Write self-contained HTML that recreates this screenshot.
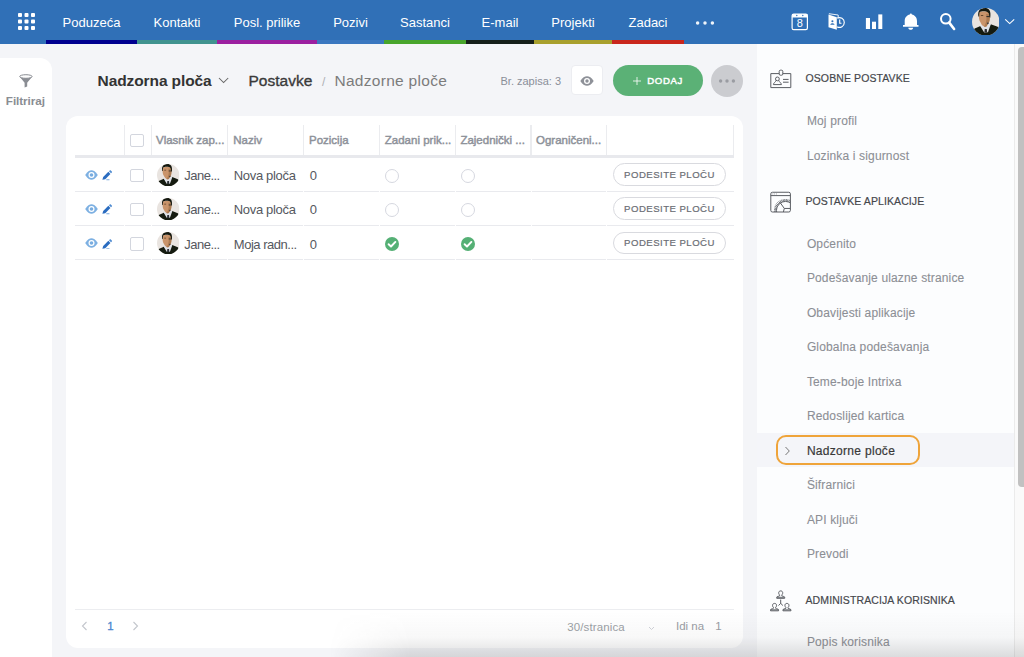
<!DOCTYPE html>
<html lang="hr">
<head>
<meta charset="utf-8">
<title>Nadzorne ploče</title>
<style>
*{box-sizing:border-box;margin:0;padding:0}
html,body{width:1024px;height:657px;overflow:hidden}
body{font-family:"Liberation Sans",sans-serif;background:#f4f5f8;position:relative;color:#444}
.a{position:absolute}
.t{position:absolute;white-space:nowrap}
#nav{position:absolute;left:0;top:0;width:1024px;height:44px;background:#3070b7}
.bar{position:absolute;top:40px;height:4px}
#left{position:absolute;left:0;top:58px;width:52px;height:599px;background:#fff;border-top-right-radius:12px}
#card{position:absolute;left:66px;top:116.4px;width:677px;height:531.4px;background:#fff;border-radius:12px}
.vs{position:absolute;top:125.4px;width:1.2px;height:30px;background:#ebecef}
.hl{position:absolute;left:75px;width:659px;height:1.3px;background:#e9eaee}
.cb{position:absolute;left:130px;width:13.5px;height:13.5px;border:1px solid #d3d6de;border-radius:2px;background:#fff}
.rad{position:absolute;width:14px;height:14px;border:1px solid #d6d8e0;border-radius:50%;background:#fff}
.pb{position:absolute;left:613px;width:113px;height:22.5px;border:1px solid #d9dadf;border-radius:12px;background:#fff}
#right{position:absolute;left:757px;top:44px;width:257px;height:613px;background:#fcfdfe}
#sb{position:absolute;left:1014px;top:44px;width:10px;height:613px;background:#fafafa;border-left:1px solid #ebebeb}
#sbt{position:absolute;left:1018px;top:47px;width:12px;height:439.5px;background:#c1c1c1;border-radius:4px}
</style>
</head>
<body>
<svg width="0" height="0" style="position:absolute">
<defs>
<symbol id="av" viewBox="0 0 28 28">
<clipPath id="avc"><circle cx="14" cy="14" r="14"/></clipPath>
<g clip-path="url(#avc)">
<rect width="28" height="28" fill="#e9e4e0"/>
<path d="M0 23 L2.8 20.8 L8.6 18.3 L13.8 22.5 L19 16.4 L26 19 L28 21 L28 28 L0 28Z" fill="#151b10"/>
<path d="M8.4 18.4 L10 16.3 L18 15.6 L19.1 16.6 L16.2 24.6 L12.4 24.9Z" fill="#dfe1e6"/>
<path d="M12.9 21.2 L15 21.2 L15.4 24.9 L12.5 24.9Z" fill="#2b2f35"/>
<path d="M7 5 C7 3.2 17.9 3.2 18 5 L18 11 C18 14 16.2 17 14.6 18.7 C13 19.7 11 18.6 9.6 16.5 C8 14 7 12 7 9Z" fill="#c9946b"/>
<path d="M14.2 6 L18 6 L18 11 C18 14 16.2 17 14.6 18.7 C13.6 19.3 12.8 19.2 12 18.7 C14.5 16 15.4 10 14.2 6Z" fill="#ac7b52"/>
<path d="M6.5 8.6 C5.4 2 9 0 13 0 C17.2 0 19.6 2.6 18.5 9.8 L17.5 9.2 C17.7 6 17 4.3 15 3.7 C12 3.1 9 3.3 7.7 4.3 C7.2 5.6 7.4 7 7.3 8.6Z" fill="#14180f"/>
<rect x="9" y="7.2" width="2.4" height="0.9" fill="#5b3f25"/>
<rect x="14.6" y="8.2" width="3" height="1" fill="#2a2a2a"/>
<rect x="15.2" y="14.8" width="1.6" height="1.4" fill="#3a3f48"/>
</g>
</symbol>
<symbol id="eye" viewBox="0 0 13 10">
<path d="M0.2 5 C2.4 1.5 4.6 0.2 6.5 0.2 C8.4 0.2 10.6 1.5 12.8 5 C10.6 8.5 8.4 9.8 6.5 9.8 C4.6 9.8 2.4 8.5 0.2 5Z" fill="#7db0e2"/>
<circle cx="6.5" cy="5" r="3" fill="#fff"/><circle cx="6.5" cy="5" r="1.8" fill="#79ade0"/>
</symbol>
<symbol id="pen" viewBox="0 0 11 11">
<path d="M0.4 10 L1.2 7.2 L6.5 1.9 L8.6 4 L3.3 9.3Z" fill="#2a6cc0"/>
<path d="M7.1 1.3 L7.9 0.5 C8.2 0.2 8.7 0.2 9 0.5 L10 1.5 C10.3 1.8 10.3 2.3 10 2.6 L9.2 3.4Z" fill="#4f8bd0"/>
<rect x="4.4" y="9.5" width="3.2" height="1" fill="#6ea3dc"/>
</symbol>
<symbol id="ok" viewBox="0 0 14 14">
<circle cx="7" cy="7" r="7" fill="#55b075"/>
<path d="M3.6 7.2 L6 9.5 L10.4 4.9" fill="none" stroke="#fff" stroke-width="1.9" stroke-linecap="round" stroke-linejoin="round"/>
</symbol>
</defs>
</svg>

<div id="nav">
<svg class="a" style="left:18px;top:13px" width="17" height="17" viewBox="0 0 17 17"><g fill="#fff"><rect x="0" y="0" width="4" height="4" rx="0.9"/><rect x="6.5" y="0" width="4" height="4" rx="0.9"/><rect x="13" y="0" width="4" height="4" rx="0.9"/><rect x="0" y="6.5" width="4" height="4" rx="0.9"/><rect x="6.5" y="6.5" width="4" height="4" rx="0.9"/><rect x="13" y="6.5" width="4" height="4" rx="0.9"/><rect x="0" y="13" width="4" height="4" rx="0.9"/><rect x="6.5" y="13" width="4" height="4" rx="0.9"/><rect x="13" y="13" width="4" height="4" rx="0.9"/></g></svg>
<div class="bar" style="left:46px;width:91px;background:#00008f"></div>
<div class="t nv" style="left:46px;top:13.00px;height:19px;line-height:19px;font-size:13px;color:#fff;width:91px;text-align:center;">Poduzeća</div>
<div class="bar" style="left:137px;width:80px;background:#40938f"></div>
<div class="t nv" style="left:137px;top:13.00px;height:19px;line-height:19px;font-size:13px;color:#fff;width:80px;text-align:center;">Kontakti</div>
<div class="bar" style="left:217px;width:100px;background:#9b1fa0"></div>
<div class="t nv" style="left:217px;top:13.00px;height:19px;line-height:19px;font-size:13px;color:#fff;width:100px;text-align:center;">Posl. prilike</div>
<div class="bar" style="left:317px;width:67px;background:#3a77c0"></div>
<div class="t nv" style="left:317px;top:13.00px;height:19px;line-height:19px;font-size:13px;color:#fff;width:67px;text-align:center;">Pozivi</div>
<div class="bar" style="left:384px;width:82px;background:#48a52c"></div>
<div class="t nv" style="left:384px;top:13.00px;height:19px;line-height:19px;font-size:13px;color:#fff;width:82px;text-align:center;">Sastanci</div>
<div class="bar" style="left:466px;width:68px;background:#16201a"></div>
<div class="t nv" style="left:466px;top:13.00px;height:19px;line-height:19px;font-size:13px;color:#fff;width:68px;text-align:center;">E-mail</div>
<div class="bar" style="left:534px;width:78px;background:#a8a02e"></div>
<div class="t nv" style="left:534px;top:13.00px;height:19px;line-height:19px;font-size:13px;color:#fff;width:78px;text-align:center;">Projekti</div>
<div class="bar" style="left:612px;width:72px;background:#c9261d"></div>
<div class="t nv" style="left:612px;top:13.00px;height:19px;line-height:19px;font-size:13px;color:#fff;width:72px;text-align:center;">Zadaci</div>
<svg class="a" style="left:695px;top:20px" width="20" height="6" viewBox="0 0 20 6"><g fill="#fff" fill-opacity="0.92"><circle cx="2.6" cy="3" r="1.75"/><circle cx="10" cy="3" r="1.75"/><circle cx="17.4" cy="3" r="1.75"/></g></svg>
<svg class="a" style="left:791px;top:13px" width="18" height="18" viewBox="0 0 18 18">
<rect x="1.1" y="1.1" width="15.3" height="15.6" rx="1.6" fill="none" stroke="#fff" stroke-width="1.2"/>
<rect x="1.1" y="1.1" width="15.3" height="3.4" fill="#fff"/>
<circle cx="5.8" cy="2.5" r="0.7" fill="#3070b7"/><circle cx="11.8" cy="2.5" r="0.7" fill="#3070b7"/>
<text x="8.8" y="14.1" font-family="Liberation Sans, sans-serif" font-size="11" fill="#fff" text-anchor="middle">8</text>
</svg>
<svg class="a" style="left:828px;top:13px" width="19" height="18" viewBox="0 0 19 18">
<path d="M0.5 1.4 L8.8 4.3 L8.8 16.7 L0.5 14.2Z" fill="#fff"/>
<path d="M0.9 0.7 L10.2 2 L10.2 4.9" fill="none" stroke="#fff" stroke-width="0.9"/>
<circle cx="4.4" cy="8.3" r="1.05" fill="#3070b7"/><path d="M2.3 11.7 C2.6 9.7 6.2 9.7 6.5 11.7Z" fill="#3070b7"/>
<path d="M9.2 5.12 A4.9 4.9 0 1 1 9.2 13.88" fill="none" stroke="#fff" stroke-width="1.15"/>
<path d="M11.7 6.6 L11.7 10.2 L13.5 10.2" fill="none" stroke="#fff" stroke-width="1.15"/>
</svg>
<svg class="a" style="left:865px;top:14px" width="18" height="16" viewBox="0 0 18 16"><g fill="#fff">
<rect x="0.9" y="4" width="4.1" height="11"/><rect x="7" y="7.7" width="4" height="7.3"/><rect x="13.3" y="0.4" width="4" height="14.6"/></g></svg>
<svg class="a" style="left:902px;top:13px" width="18" height="18" viewBox="0 0 18 18">
<path d="M8.85 0.4 C9.6 0.4 9.9 1 9.9 1.6 C12.8 2.2 15 4.6 15 8 L15 12.1 L16.5 12.1 L16.5 13.7 L1 13.7 L1 12.1 L2.7 12.1 L2.7 8 C2.7 4.6 4.9 2.2 7.8 1.6 C7.8 1 8.1 0.4 8.85 0.4Z" fill="#fff"/>
<path d="M6.3 14.7 L11.1 14.7 C11.1 17.5 6.3 17.5 6.3 14.7Z" fill="#fff"/></svg>
<svg class="a" style="left:939px;top:12px" width="18" height="20" viewBox="0 0 18 20">
<circle cx="6.8" cy="6.8" r="4.8" fill="none" stroke="#fff" stroke-width="2"/>
<path d="M10.2 10.6 L15.1 17" stroke="#fff" stroke-width="2.6" stroke-linecap="round"/></svg>
<svg class="a" style="left:971.5px;top:7.6px" width="27.6" height="27.6"><use href="#av"/></svg>
<svg class="a" style="left:1004px;top:18px" width="12" height="8" viewBox="0 0 12 8"><path d="M1.2 1.3 L5.7 5.6 L10.2 1.3" fill="none" stroke="#fff" stroke-width="1.1"/></svg>
</div>
<div id="left"></div>
<svg class="a" style="left:18.5px;top:74.4px" width="14" height="14" viewBox="0 0 14 14">
<path d="M0.7 2.8 L5.6 8.8 L5.6 13.5 L8.2 12.4 L8.2 8.8 L13.1 2.8Z" fill="#8a8d93"/>
<ellipse cx="6.9" cy="2.5" rx="6.2" ry="1.8" fill="#fdfdfd" stroke="#8a8d93" stroke-width="1"/></svg>
<div class="t fl" style="left:5.8px;top:92.00px;height:17px;line-height:17px;font-size:11.7px;color:#8a8d93;font-weight:bold;letter-spacing:-0.05px;">Filtriraj</div>
<div class="t h1" style="left:97.6px;top:69.00px;height:23px;line-height:23px;font-size:15.5px;color:#333;font-weight:bold;letter-spacing:-0.1px;">Nadzorna ploča</div>
<svg class="a" style="left:218px;top:77px" width="11" height="7" viewBox="0 0 11 7"><path d="M1 1 L5.6 5.6 L10.2 1" fill="none" stroke="#666" stroke-width="1.05"/></svg>
<div class="t h2" style="left:248.5px;top:69.00px;height:23px;line-height:23px;font-size:15.5px;color:#3a3a3a;-webkit-text-stroke:0.35px #3a3a3a;">Postavke</div>
<div class="t h3" style="left:322px;top:73.00px;height:18px;line-height:18px;font-size:12px;color:#aeb0b5;">/</div>
<div class="t h4" style="left:334.4px;top:69.00px;height:23px;line-height:23px;font-size:15.5px;color:#7c7c7c;letter-spacing:0.3px;">Nadzorne ploče</div>
<div class="t brz" style="left:500.5px;top:73.00px;height:16px;line-height:16px;font-size:11px;color:#8a8f98;">Br. zapisa: 3</div>
<div class="a" style="left:570.6px;top:65px;width:32.4px;height:30.4px;background:#fff;border:1px solid #ecedf1;border-radius:4px"></div>
<svg class="a" style="left:580px;top:75.5px" width="14" height="10" viewBox="0 0 14 10">
<path d="M0.3 5 C2.5 1.4 4.8 0.3 7 0.3 C9.2 0.3 11.5 1.4 13.7 5 C11.5 8.6 9.2 9.7 7 9.7 C4.8 9.7 2.5 8.6 0.3 5Z" fill="#8e9198"/>
<circle cx="7" cy="5" r="3" fill="#fff"/><circle cx="7" cy="5" r="1.7" fill="#8e9198"/></svg>
<div class="a" style="left:613px;top:65px;width:90px;height:31px;background:#5bb176;border-radius:16px"></div>
<svg class="a" style="left:631.6px;top:75.8px" width="10" height="10" viewBox="0 0 10 10"><path d="M5 1 V9 M1 5 H9" stroke="#fff" stroke-width="0.9" stroke-opacity="0.9" fill="none"/></svg>
<div class="t dodaj" style="left:647.3px;top:74.00px;height:13px;line-height:13px;font-size:9.6px;color:#fff;letter-spacing:0.64px;-webkit-text-stroke:0.45px #fff;">DODAJ</div>
<div class="a" style="left:711px;top:65px;width:32px;height:32px;background:#cbccd0;border-radius:50%"></div>
<svg class="a" style="left:718px;top:78px" width="18" height="6" viewBox="0 0 18 6"><g fill="#9a9ca2"><circle cx="2.6" cy="3" r="1.7"/><circle cx="9" cy="3" r="1.7"/><circle cx="15.4" cy="3" r="1.7"/></g></svg>
<div id="card"></div>
<div class="vs" style="left:123.7px"></div>
<div class="vs" style="left:150.9px"></div>
<div class="vs" style="left:227.2px"></div>
<div class="vs" style="left:303.2px"></div>
<div class="vs" style="left:379.1px"></div>
<div class="vs" style="left:454.7px"></div>
<div class="vs" style="left:530.4px"></div>
<div class="vs" style="left:605.9px"></div>
<div class="vs" style="left:733.2px"></div>
<div class="hl" style="top:155.2px;height:2.8px;background:#e8e9ed"></div>
<div class="hl" style="top:191.0px"></div>
<div class="a" style="left:123.9px;top:190.5px;width:1px;height:2.5px;background:#fff"></div>
<div class="a" style="left:151.1px;top:190.5px;width:1px;height:2.5px;background:#fff"></div>
<div class="a" style="left:227.4px;top:190.5px;width:1px;height:2.5px;background:#fff"></div>
<div class="a" style="left:303.4px;top:190.5px;width:1px;height:2.5px;background:#fff"></div>
<div class="a" style="left:379.3px;top:190.5px;width:1px;height:2.5px;background:#fff"></div>
<div class="a" style="left:454.9px;top:190.5px;width:1px;height:2.5px;background:#fff"></div>
<div class="a" style="left:530.6px;top:190.5px;width:1px;height:2.5px;background:#fff"></div>
<div class="a" style="left:606.1px;top:190.5px;width:1px;height:2.5px;background:#fff"></div>
<div class="hl" style="top:225.2px"></div>
<div class="a" style="left:123.9px;top:224.7px;width:1px;height:2.5px;background:#fff"></div>
<div class="a" style="left:151.1px;top:224.7px;width:1px;height:2.5px;background:#fff"></div>
<div class="a" style="left:227.4px;top:224.7px;width:1px;height:2.5px;background:#fff"></div>
<div class="a" style="left:303.4px;top:224.7px;width:1px;height:2.5px;background:#fff"></div>
<div class="a" style="left:379.3px;top:224.7px;width:1px;height:2.5px;background:#fff"></div>
<div class="a" style="left:454.9px;top:224.7px;width:1px;height:2.5px;background:#fff"></div>
<div class="a" style="left:530.6px;top:224.7px;width:1px;height:2.5px;background:#fff"></div>
<div class="a" style="left:606.1px;top:224.7px;width:1px;height:2.5px;background:#fff"></div>
<div class="hl" style="top:259.2px"></div>
<div class="a" style="left:123.9px;top:258.7px;width:1px;height:2.5px;background:#fff"></div>
<div class="a" style="left:151.1px;top:258.7px;width:1px;height:2.5px;background:#fff"></div>
<div class="a" style="left:227.4px;top:258.7px;width:1px;height:2.5px;background:#fff"></div>
<div class="a" style="left:303.4px;top:258.7px;width:1px;height:2.5px;background:#fff"></div>
<div class="a" style="left:379.3px;top:258.7px;width:1px;height:2.5px;background:#fff"></div>
<div class="a" style="left:454.9px;top:258.7px;width:1px;height:2.5px;background:#fff"></div>
<div class="a" style="left:530.6px;top:258.7px;width:1px;height:2.5px;background:#fff"></div>
<div class="a" style="left:606.1px;top:258.7px;width:1px;height:2.5px;background:#fff"></div>
<div class="cb" style="top:133.5px"></div>
<div class="t th" style="left:156px;top:132.00px;height:16px;line-height:16px;font-size:11.5px;color:#8d9199;-webkit-text-stroke:0.45px #8d9199;">Vlasnik zap...</div>
<div class="t th" style="left:233.2px;top:132.00px;height:16px;line-height:16px;font-size:11.5px;color:#8d9199;-webkit-text-stroke:0.45px #8d9199;">Naziv</div>
<div class="t th" style="left:309px;top:132.00px;height:16px;line-height:16px;font-size:11.5px;color:#8d9199;-webkit-text-stroke:0.45px #8d9199;">Pozicija</div>
<div class="t th" style="left:384.8px;top:132.00px;height:16px;line-height:16px;font-size:11.5px;color:#8d9199;-webkit-text-stroke:0.45px #8d9199;">Zadani prik...</div>
<div class="t th" style="left:460.4px;top:132.00px;height:16px;line-height:16px;font-size:11.5px;color:#8d9199;-webkit-text-stroke:0.45px #8d9199;">Zajednički ...</div>
<div class="t th" style="left:536px;top:132.00px;height:16px;line-height:16px;font-size:11.5px;color:#8d9199;-webkit-text-stroke:0.45px #8d9199;">Ograničeni...</div>
<svg class="a" style="left:84.8px;top:170.10px" width="13" height="10"><use href="#eye"/></svg>
<svg class="a" style="left:101.6px;top:170.30px" width="10.8" height="10.8"><use href="#pen"/></svg>
<div class="cb" style="top:168.80px"></div>
<svg class="a" style="left:157.3px;top:163.80px" width="22.4" height="22.4"><use href="#av"/></svg>
<div class="t td jn" style="left:184.2px;top:166.00px;height:19px;line-height:19px;font-size:13px;color:#55585e;letter-spacing:-0.5px;">Jane...</div>
<div class="t td nm" style="left:233.8px;top:166.00px;height:19px;line-height:19px;font-size:13px;color:#55585e;letter-spacing:-0.33px;">Nova ploča</div>
<div class="t td" style="left:309.8px;top:166.00px;height:19px;line-height:19px;font-size:13px;color:#55585e;">0</div>
<div class="rad" style="left:385px;top:169.10px"></div>
<div class="rad" style="left:460.8px;top:169.10px"></div>
<div class="pb" style="top:163.30px"></div>
<div class="t pbt" style="left:613px;top:168.00px;height:13px;line-height:13px;font-size:9.6px;color:#6b6e75;letter-spacing:0.47px;width:113px;text-align:center;-webkit-text-stroke:0.2px #6b6e75;">PODESITE PLOČU</div>
<svg class="a" style="left:84.8px;top:204.25px" width="13" height="10"><use href="#eye"/></svg>
<svg class="a" style="left:101.6px;top:204.45px" width="10.8" height="10.8"><use href="#pen"/></svg>
<div class="cb" style="top:202.95px"></div>
<svg class="a" style="left:157.3px;top:197.95px" width="22.4" height="22.4"><use href="#av"/></svg>
<div class="t td jn" style="left:184.2px;top:200.00px;height:19px;line-height:19px;font-size:13px;color:#55585e;letter-spacing:-0.5px;">Jane...</div>
<div class="t td nm" style="left:233.8px;top:200.00px;height:19px;line-height:19px;font-size:13px;color:#55585e;letter-spacing:-0.33px;">Nova ploča</div>
<div class="t td" style="left:309.8px;top:200.00px;height:19px;line-height:19px;font-size:13px;color:#55585e;">0</div>
<div class="rad" style="left:385px;top:203.25px"></div>
<div class="rad" style="left:460.8px;top:203.25px"></div>
<div class="pb" style="top:197.45px"></div>
<div class="t pbt" style="left:613px;top:202.00px;height:13px;line-height:13px;font-size:9.6px;color:#6b6e75;letter-spacing:0.47px;width:113px;text-align:center;-webkit-text-stroke:0.2px #6b6e75;">PODESITE PLOČU</div>
<svg class="a" style="left:84.8px;top:238.40px" width="13" height="10"><use href="#eye"/></svg>
<svg class="a" style="left:101.6px;top:238.60px" width="10.8" height="10.8"><use href="#pen"/></svg>
<div class="cb" style="top:237.10px"></div>
<svg class="a" style="left:157.3px;top:232.10px" width="22.4" height="22.4"><use href="#av"/></svg>
<div class="t td jn" style="left:184.2px;top:235.00px;height:19px;line-height:19px;font-size:13px;color:#55585e;letter-spacing:-0.5px;">Jane...</div>
<div class="t td nm" style="left:233.8px;top:235.00px;height:19px;line-height:19px;font-size:13px;color:#55585e;letter-spacing:-0.48px;">Moja radn...</div>
<div class="t td" style="left:309.8px;top:235.00px;height:19px;line-height:19px;font-size:13px;color:#55585e;">0</div>
<svg class="a" style="left:385px;top:237.40px" width="14" height="14"><use href="#ok"/></svg>
<svg class="a" style="left:460.8px;top:237.40px" width="14" height="14"><use href="#ok"/></svg>
<div class="pb" style="top:231.60px"></div>
<div class="t pbt" style="left:613px;top:236.00px;height:13px;line-height:13px;font-size:9.6px;color:#6b6e75;letter-spacing:0.47px;width:113px;text-align:center;-webkit-text-stroke:0.2px #6b6e75;">PODESITE PLOČU</div>
<div class="hl" style="top:609px;height:1px;background:#ecedf0"></div>
<svg class="a" style="left:81px;top:621.3px" width="7" height="10" viewBox="0 0 7 10"><path d="M5.5 1 L1.5 5 L5.5 9" fill="none" stroke="#c3c6cc" stroke-width="1.1"/></svg>
<div class="t pg1" style="left:107.3px;top:618.00px;height:16px;line-height:16px;font-size:11.5px;color:#4a86cf;-webkit-text-stroke:0.3px #4a86cf;">1</div>
<svg class="a" style="left:132px;top:621.3px" width="7" height="10" viewBox="0 0 7 10"><path d="M1.5 1 L5.5 5 L1.5 9" fill="none" stroke="#c3c6cc" stroke-width="1.1"/></svg>
<div class="t pgs" style="left:567.2px;top:619.00px;height:16px;line-height:16px;font-size:11.5px;color:#9c9fa5;letter-spacing:0.12px;">30/stranica</div>
<svg class="a" style="left:647.5px;top:625.5px" width="7" height="5" viewBox="0 0 7 5"><path d="M1 1 L3.5 3.5 L6 1" fill="none" stroke="#d0d2d8" stroke-width="1"/></svg>
<div class="t pgi" style="left:676px;top:618.00px;height:16px;line-height:16px;font-size:11.5px;color:#9a9da4;">Idi na</div>
<div class="t pgn" style="left:715.3px;top:618.00px;height:16px;line-height:16px;font-size:11.5px;color:#9a9da4;">1</div>
<div id="right"></div>
<div class="a" style="left:757px;top:433px;width:257px;height:34.4px;background:#f4f5f9"></div>
<div class="a" style="left:776.3px;top:435.2px;width:143.8px;height:30.3px;border:2px solid #efa43a;border-radius:10px"></div>
<svg class="a" style="left:784px;top:445.5px" width="7" height="10" viewBox="0 0 7 10"><path d="M1.5 1 L5.3 5 L1.5 9" fill="none" stroke="#777" stroke-width="1"/></svg>
<svg class="a" style="left:769px;top:69px" width="24" height="20" viewBox="0 0 24 20">
<g fill="none" stroke="#5a5d63" stroke-width="1">
<path d="M10 4.6 H1.8 V18.6 H21.8 V4.6 H14"/>
<rect x="10.2" y="1.2" width="3.6" height="5" rx="1.2" fill="#fcfdfe"/>
<circle cx="8.4" cy="9.9" r="1.9"/>
<path d="M7 11.4 C6.6 13.4 4.6 13.4 4.4 15.6 H12.4 C12.2 13.4 10.2 13.4 9.8 11.4"/>
<path d="M14 10.4 H19.6 M14 13.2 H19.6"/>
</g></svg>
<svg class="a" style="left:769px;top:190px" width="24" height="24" viewBox="0 0 24 24">
<clipPath id="wc"><rect x="1.8" y="2.25" width="19.6" height="19.75"/></clipPath>
<g fill="none" stroke="#5a5d63" stroke-width="1">
<g clip-path="url(#wc)">
<path d="M7.22 21.15 L5.03 21.30 M7.22 19.82 L5.03 19.66 M7.42 18.50 L5.27 18.03 M7.79 17.23 L5.74 16.45 M8.35 16.02 L6.42 14.96 M9.07 14.90 L7.32 13.58 M9.95 13.90 L8.40 12.34 M10.96 13.03 L9.64 11.27 M12.08 12.32 L11.03 10.38 M13.29 11.77 L12.53 9.71 M14.57 11.40 L14.11 9.25 M15.88 11.22 L15.74 9.03 M17.21 11.23 L17.38 9.03 M18.53 11.42 L19.01 9.28 M19.80 11.81 L20.58 9.75 M21.01 12.37 L22.08 10.44 " stroke-width="0.85"/>
<circle cx="16.5" cy="20.5" r="9.1"/>
<path d="M11 12.4 L15.3 18.45 H21.4 M15.3 18.45 L14.4 22"/>
</g>
<rect x="1.8" y="2.25" width="19.6" height="19.75" rx="1.6"/>
<path d="M1.8 5.6 H21.4"/>
<path d="M3.4 3.95 H4.3 M5.2 3.95 H6.1 M7 3.95 H7.9" stroke-width="0.8" stroke="#8a8d93"/>
</g></svg>
<svg class="a" style="left:769px;top:589px" width="24" height="24" viewBox="0 0 24 24">
<g fill="none" stroke="#5a5d63" stroke-width="1">
<path d="M10.60 5.90 C9.20 4.80 9.30 1.90 11.70 1.90 C14.10 1.90 14.20 4.80 12.80 5.90 L12.80 6.80 C13.70 7.50 15.70 7.30 15.70 8.50 L15.70 9.30 H7.70 L7.70 8.50 C7.70 7.30 9.70 7.50 10.60 6.80Z"/><path d="M7.70 8.30 H15.70" stroke-width="0.9"/><path d="M4.45 18.40 C3.05 17.30 3.15 14.40 5.55 14.40 C7.95 14.40 8.05 17.30 6.65 18.40 L6.65 19.30 C7.55 20.00 9.55 19.80 9.55 21.00 L9.55 21.80 H1.55 L1.55 21.00 C1.55 19.80 3.55 20.00 4.45 19.30Z"/><path d="M1.55 20.80 H9.55" stroke-width="0.9"/><path d="M16.85 18.40 C15.45 17.30 15.55 14.40 17.95 14.40 C20.35 14.40 20.45 17.30 19.05 18.40 L19.05 19.30 C19.95 20.00 21.95 19.80 21.95 21.00 L21.95 21.80 H13.95 L13.95 21.00 C13.95 19.80 15.95 20.00 16.85 19.30Z"/><path d="M13.95 20.80 H21.95" stroke-width="0.9"/>
<path d="M11.7 10.6 V14.6 M11.7 14.4 L9.5 16.5 M11.7 14.4 L13.9 16.5"/>
</g></svg>
<div class="t sh" style="left:805.5px;top:70.00px;height:16px;line-height:16px;font-size:10.5px;color:#45474c;letter-spacing:0.1px;-webkit-text-stroke:0.18px #45474c;">OSOBNE POSTAVKE</div>
<div class="t sh" style="left:805.5px;top:193.00px;height:16px;line-height:16px;font-size:10.5px;color:#45474c;letter-spacing:0.1px;-webkit-text-stroke:0.18px #45474c;">POSTAVKE APLIKACIJE</div>
<div class="t sh" style="left:805.5px;top:592.00px;height:16px;line-height:16px;font-size:10.5px;color:#45474c;letter-spacing:0.1px;-webkit-text-stroke:0.18px #45474c;">ADMINISTRACIJA KORISNIKA</div>
<div class="t si" style="left:806.9px;top:112.00px;height:18px;line-height:18px;font-size:12px;color:#8c8f95;letter-spacing:0.15px;-webkit-text-stroke:0.1px #8c8f95;">Moj profil</div>
<div class="t si" style="left:806.9px;top:147.00px;height:18px;line-height:18px;font-size:12px;color:#8c8f95;letter-spacing:0.15px;-webkit-text-stroke:0.1px #8c8f95;">Lozinka i sigurnost</div>
<div class="t si" style="left:806.9px;top:235.00px;height:18px;line-height:18px;font-size:12px;color:#8c8f95;letter-spacing:0.15px;-webkit-text-stroke:0.1px #8c8f95;">Općenito</div>
<div class="t si" style="left:806.9px;top:269.00px;height:18px;line-height:18px;font-size:12px;color:#8c8f95;letter-spacing:0.15px;-webkit-text-stroke:0.1px #8c8f95;">Podešavanje ulazne stranice</div>
<div class="t si" style="left:806.9px;top:304.00px;height:18px;line-height:18px;font-size:12px;color:#8c8f95;letter-spacing:0.15px;-webkit-text-stroke:0.1px #8c8f95;">Obavijesti aplikacije</div>
<div class="t si" style="left:806.9px;top:338.00px;height:18px;line-height:18px;font-size:12px;color:#8c8f95;letter-spacing:0.15px;-webkit-text-stroke:0.1px #8c8f95;">Globalna podešavanja</div>
<div class="t si" style="left:806.9px;top:373.00px;height:18px;line-height:18px;font-size:12px;color:#8c8f95;letter-spacing:0.15px;-webkit-text-stroke:0.1px #8c8f95;">Teme-boje Intrixa</div>
<div class="t si" style="left:806.9px;top:407.00px;height:18px;line-height:18px;font-size:12px;color:#8c8f95;letter-spacing:0.15px;-webkit-text-stroke:0.1px #8c8f95;">Redoslijed kartica</div>
<div class="t si" style="left:806.9px;top:442.00px;height:18px;line-height:18px;font-size:12px;color:#383838;letter-spacing:0.3px;-webkit-text-stroke:0.2px #383838;">Nadzorne ploče</div>
<div class="t si" style="left:806.9px;top:476.00px;height:18px;line-height:18px;font-size:12px;color:#8c8f95;letter-spacing:0.15px;-webkit-text-stroke:0.1px #8c8f95;">Šifrarnici</div>
<div class="t si" style="left:806.9px;top:511.00px;height:18px;line-height:18px;font-size:12px;color:#8c8f95;letter-spacing:0.15px;-webkit-text-stroke:0.1px #8c8f95;">API ključi</div>
<div class="t si" style="left:806.9px;top:545.00px;height:18px;line-height:18px;font-size:12px;color:#8c8f95;letter-spacing:0.15px;-webkit-text-stroke:0.1px #8c8f95;">Prevodi</div>
<div class="t si" style="left:806.9px;top:633.00px;height:18px;line-height:18px;font-size:12px;color:#8c8f95;letter-spacing:0.15px;-webkit-text-stroke:0.1px #8c8f95;">Popis korisnika</div>
<div id="sb"></div><div id="sbt"></div>
<div class="a" style="left:330px;top:612px;width:694px;height:45px;background:linear-gradient(to bottom,rgba(95,95,97,0) 0%,rgba(95,95,97,0.045) 55%,rgba(90,90,92,0.2) 100%);-webkit-mask-image:linear-gradient(to right,transparent 0,#000 80px);mask-image:linear-gradient(to right,transparent 0,#000 80px)"></div>
</body></html>
